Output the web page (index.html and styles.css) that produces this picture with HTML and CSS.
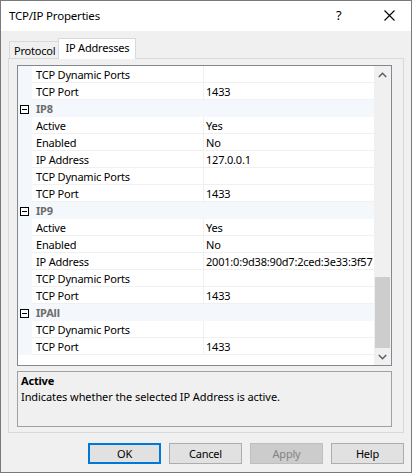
FILE: index.html
```html
<!DOCTYPE html>
<html>
<head>
<meta charset="utf-8">
<title>TCP/IP Properties</title>
<link rel="stylesheet" href="styles.css">
</head>
<body>
<div class="window">
  <div class="titlebar">
    <span class="title">TCP/IP Properties</span>
    <span class="help">?</span>
    <span class="close"><svg width="11" height="11" viewBox="0 0 11 11"><path d="M0.5 0.5 L10.5 10.5 M10.5 0.5 L0.5 10.5" stroke="#000" stroke-width="1.1" fill="none"/></svg></span>
  </div>
  <div class="body">
    <div class="tabs">
      <div class="tab">Protocol</div>
      <div class="tab active">IP Addresses</div>
    </div>
    <div class="panel">
      <div class="grid">
        <div class="rows">
          <div class="row"><div class="margin"></div><div class="name">TCP Dynamic Ports</div><div class="value"></div></div>
          <div class="row"><div class="margin"></div><div class="name">TCP Port</div><div class="value">1433</div></div>
          <div class="row cat"><div class="margin"><span class="minus"></span></div><div class="name">IP8</div></div>
          <div class="row"><div class="margin"></div><div class="name">Active</div><div class="value">Yes</div></div>
          <div class="row"><div class="margin"></div><div class="name">Enabled</div><div class="value">No</div></div>
          <div class="row"><div class="margin"></div><div class="name">IP Address</div><div class="value">127.0.0.1</div></div>
          <div class="row"><div class="margin"></div><div class="name">TCP Dynamic Ports</div><div class="value"></div></div>
          <div class="row"><div class="margin"></div><div class="name">TCP Port</div><div class="value">1433</div></div>
          <div class="row cat"><div class="margin"><span class="minus"></span></div><div class="name">IP9</div></div>
          <div class="row"><div class="margin"></div><div class="name">Active</div><div class="value">Yes</div></div>
          <div class="row"><div class="margin"></div><div class="name">Enabled</div><div class="value">No</div></div>
          <div class="row"><div class="margin"></div><div class="name">IP Address</div><div class="value">2001:0:9d38:90d7:2ced:3e33:3f57</div></div>
          <div class="row"><div class="margin"></div><div class="name">TCP Dynamic Ports</div><div class="value"></div></div>
          <div class="row"><div class="margin"></div><div class="name">TCP Port</div><div class="value">1433</div></div>
          <div class="row cat"><div class="margin"><span class="minus"></span></div><div class="name">IPAll</div></div>
          <div class="row"><div class="margin"></div><div class="name">TCP Dynamic Ports</div><div class="value"></div></div>
          <div class="row"><div class="margin"></div><div class="name">TCP Port</div><div class="value">1433</div></div>
        </div>
        <div class="scrollbar">
          <div class="arrow"><svg width="9" height="6" viewBox="0 0 9 6"><path d="M0.8 5 L4.5 1.3 L8.2 5" stroke="#606060" stroke-width="1.6" fill="none"/></svg></div>
          <div class="track"><div class="thumb"></div></div>
          <div class="arrow"><svg width="9" height="6" viewBox="0 0 9 6"><path d="M0.8 1 L4.5 4.7 L8.2 1" stroke="#606060" stroke-width="1.6" fill="none"/></svg></div>
        </div>
      </div>
      <div class="desc">
        <div class="desc-title">Active</div>
        <div class="desc-text">Indicates whether the selected IP Address is active.</div>
      </div>
    </div>
    <div class="buttons">
      <div class="btn default">OK</div>
      <div class="btn">Cancel</div>
      <div class="btn disabled">Apply</div>
      <div class="btn">Help</div>
    </div>
  </div>
</div>
</body>
</html>
```
FILE: styles.css
```css
* { box-sizing: border-box; }
html, body { margin: 0; padding: 0; background: #ffffff; }
body {
  font-family: "Noto Sans", "Open Sans", sans-serif;
  font-size: 11px;
  letter-spacing: -0.2px;
  color: #000;
}
.window {
  width: 412px;
  height: 473px;
  border: 1px solid #7a7a7a;
  background: #f0f0f0;
  display: flex;
  flex-direction: column;
}
.titlebar {
  height: 30px;
  background: #fff;
  display: flex;
  align-items: center;
  padding-left: 8px;
  flex: none;
}
.title { font-size: 11.5px; flex: 1; padding-bottom: 1px; }
.help { font-size: 13px; width: 12px; margin-right: 36px; padding-bottom: 2px; }
.close { width: 11px; height: 11px; margin-right: 16px; margin-bottom: 1px; display: flex; }
.body {
  flex: 1;
  display: flex;
  flex-direction: column;
  padding: 7px 7px 8px 7px;
}
.tabs {
  display: flex;
  align-items: flex-end;
  height: 20px;
  padding-left: 1px;
  position: relative;
  z-index: 1;
}
.tab {
  height: 17px;
  border: 1px solid #d9d9d9;
  border-bottom: none;
  border-right: none;
  padding: 0 3px 0 4px;
  line-height: 17px;
  background: #f0f0f0;
}
.tab.active {
  height: 21px;
  margin-bottom: -1px;
  border-right: 1px solid #d9d9d9;
  background: #fff;
  padding: 0 6px 0 6px;
  line-height: 18px;
}
.panel {
  height: 375px;
  border: 1px solid #d9d9d9;
  background: #f0f0f0;
  padding: 6px 11px 5px 8px;
  display: flex;
  flex-direction: column;
  gap: 5px;
}
.grid {
  height: 301px;
  border: 1px solid #828790;
  background: #fff;
  display: flex;
}
.rows { flex: 1; display: flex; flex-direction: column; overflow: hidden; }
.row { display: flex; height: 17px; flex: none; }
.margin { width: 14px; flex: none; background: #f4f7fc; position: relative; }
.name {
  width: 172px;
  flex: none;
  border-right: 1px solid #f0f0f0;
  border-bottom: 1px solid #f0f0f0;
  padding: 1px 0 0 4px;
  line-height: 16px;
  white-space: nowrap;
}
.value {
  flex: 1;
  border-bottom: 1px solid #f0f0f0;
  padding: 1px 0 0 2px;
  line-height: 16px;
  white-space: nowrap;
  overflow: hidden;
}
.row.cat { background: #f4f7fc; }
.row.cat .name {
  flex: 1;
  border-right: none;
  border-bottom: 1px solid #f4f7fc;
  font-weight: bold;
  color: #6d6d6d;
}
.minus {
  position: absolute;
  left: 2px;
  top: 5px;
  width: 9px;
  height: 9px;
  border: 1px solid #000;
  background: #fff;
}
.minus::after {
  content: "";
  position: absolute;
  left: 1px;
  top: 3px;
  width: 5px;
  height: 1px;
  background: #000;
}
.scrollbar {
  width: 17px;
  flex: none;
  background: #f0f0f0;
  display: flex;
  flex-direction: column;
}
.arrow { height: 17px; flex: none; display: flex; align-items: center; justify-content: center; }
.track { flex: 1; display: flex; flex-direction: column; justify-content: flex-end; }
.thumb { height: 71px; margin: 0 1px; background: #cdcdcd; }
.desc {
  height: 56px;
  border: 1px solid #a0a0a0;
  background: #f0f0f0;
  padding: 1px 3px;
  line-height: 16px;
}
.desc-title { font-weight: bold; }
.desc-text { letter-spacing: -0.08px; }
.buttons {
  display: flex;
  justify-content: flex-end;
  gap: 8px;
  margin-top: 10px;
}
.btn {
  width: 73px;
  height: 21px;
  border: 1px solid #adadad;
  background: #e1e1e1;
  display: flex;
  align-items: center;
  justify-content: center;
  padding-bottom: 1px;
}
.btn.default { border: 2px solid #0078d7; }
.btn.disabled { background: #cccccc; border-color: #bfbfbf; color: #838383; }
```
